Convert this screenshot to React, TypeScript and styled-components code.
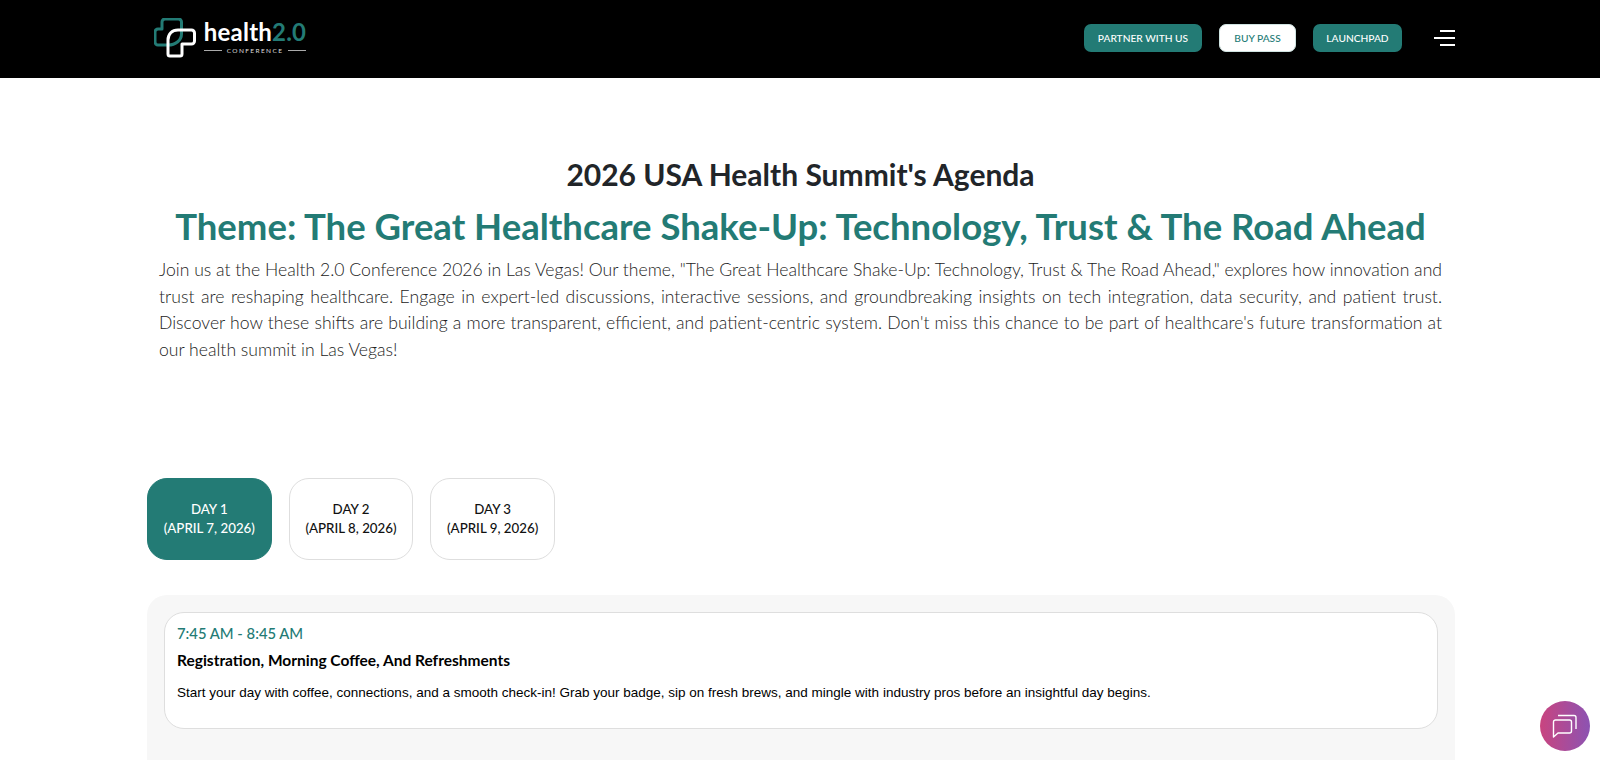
import { createGlobalStyle } from 'styled-components';
import styled from 'styled-components';

const GlobalStyle = createGlobalStyle`
  * { box-sizing: border-box; }
  html, body { margin: 0; padding: 0; background: #fff; overflow: hidden; }
  body { font-family: Lato, "Open Sans", sans-serif; }
`;

const TEAL = '#237b75';

const Page = styled.div`
  width: 1600px;
  height: 760px;
  overflow: hidden;
  position: relative;
`;

const Header = styled.header`
  height: 78px;
  background: #000;
  padding: 0 145px 3px 154px;
  display: flex;
  align-items: center;
  justify-content: space-between;
`;

const Logo = styled.div`
  display: flex;
  align-items: center;
  gap: 8px;
`;

const LogoText = styled.div`
  display: flex;
  flex-direction: column;
  align-items: center;
  width: 102px;
`;

const Wordmark = styled.div`
  font-size: 24px;
  font-weight: 700;
  line-height: 24px;
  letter-spacing: 0.2px;
  color: #fff;
  white-space: nowrap;
  span { color: ${TEAL}; }
`;

const Tagline = styled.div`
  display: flex;
  align-items: center;
  gap: 5px;
  width: 100%;
  margin-top: 2px;
  font-size: 6.5px;
  line-height: 9px;
  letter-spacing: 1.4px;
  color: #ddd;
  &::before, &::after {
    content: '';
    flex: 1;
    height: 1px;
    background: #aaa;
  }
`;

const Nav = styled.nav`
  display: flex;
  align-items: center;
`;

const NavButton = styled.button<{ $light?: boolean; $w: number }>`
  width: ${p => p.$w}px;
  height: 28px;
  margin-right: 17px;
  border-radius: 7px;
  border: ${p => (p.$light ? `1px solid #cfe3e1` : 'none')};
  background: ${p => (p.$light ? '#fff' : TEAL)};
  color: ${p => (p.$light ? TEAL : '#fff')};
  font-family: Lato, sans-serif;
  font-size: 10.2px;
  font-weight: 500;
  padding: 0;
`;

const Burger = styled.div`
  margin-left: 15px;
  width: 21px;
  display: flex;
  flex-direction: column;
  align-items: flex-end;
  gap: 5px;
`;

const BurgerLine = styled.span<{ $w: number }>`
  display: block;
  height: 2px;
  width: ${p => p.$w}px;
  background: #fff;
`;

const Intro = styled.section`
  padding: 78px 158px 0 159px;
  display: flex;
  flex-direction: column;
  align-items: center;
`;

const Title = styled.h1`
  margin: 0;
  font-size: 30px;
  line-height: 36px;
  font-weight: 700;
  color: #212529;
`;

const Theme = styled.h2`
  margin: 12px 0 0;
  font-size: 36.5px;
  line-height: 44px;
  font-weight: 700;
  color: ${TEAL};
  white-space: nowrap;
`;

const Lead = styled.p`
  margin: 9px 0 0;
  font-size: 17.6px;
  line-height: 26.5px;
  font-weight: 300;
  color: #222;
  text-align: justify;
`;

const Tabs = styled.div`
  display: flex;
  gap: 17px;
  margin: 115px 0 0 147px;
`;

const Tab = styled.div<{ $active?: boolean }>`
  width: 124.67px;
  height: 82px;
  border-radius: 20px;
  border: 1px solid ${p => (p.$active ? TEAL : '#dedede')};
  background: ${p => (p.$active ? TEAL : '#fff')};
  color: ${p => (p.$active ? '#fff' : '#111')};
  font-size: 13.3px;
  line-height: 19px;
  font-weight: 500;
  display: flex;
  flex-direction: column;
  align-items: center;
  justify-content: center;
`;

const Panel = styled.section`
  margin: 35px 145px 0 147px;
  height: 300px;
  padding: 17px;
  background: #f7f7f7;
  border-radius: 20px;
`;

const Card = styled.article`
  height: 117px;
  padding: 10px 12px;
  background: #fff;
  border: 1px solid #dedede;
  border-radius: 20px;
`;

const Time = styled.div`
  font-size: 14.8px;
  line-height: 20px;
  font-weight: 500;
  color: ${TEAL};
`;

const CardTitle = styled.h3`
  margin: 7px 0 0;
  font-size: 15.5px;
  line-height: 20px;
  font-weight: 700;
  color: #000;
`;

const CardText = styled.p`
  margin: 13px 0 0;
  font-family: "Liberation Sans", Arial, sans-serif;
  font-size: 13.5px;
  line-height: 20px;
  color: #000;
`;

const ChatBubble = styled.button`
  position: absolute;
  left: 1540px;
  top: 701px;
  width: 50px;
  height: 50px;
  border: none;
  padding: 0;
  border-radius: 50%;
  background: linear-gradient(90deg, #c9447f, #8c53b2);
  display: flex;
  align-items: center;
  justify-content: center;
`;

function LogoMark() {
  return (
    <svg width="42" height="40" viewBox="0 0 42 40" fill="none" strokeLinejoin="round">
      <path
        d="M27.5 16V4a3 3 0 0 0-3-3H11a3 3 0 0 0-3 3v7H4a3 3 0 0 0-3 3v10a3 3 0 0 0 3 3h10C22 27 27.5 22 27.5 16z"
        stroke={TEAL}
        strokeWidth="3"
      />
      <path
        d="M14 36V22c0-6 4-10 10-10h13.5a3 3 0 0 1 3 3v8a3 3 0 0 1-3 3H28v10a2 2 0 0 1-2 2H16a2 2 0 0 1-2-2z"
        stroke="#fff"
        strokeWidth="3"
      />
    </svg>
  );
}

function ChatIcon() {
  return (
    <svg width="26" height="26" viewBox="0 0 26 26" fill="none" stroke="#fff" strokeWidth="1.4" strokeLinejoin="round">
      <path d="M1.5 9a2 2 0 0 1 2-2h14a2 2 0 0 1 2 2v9a2 2 0 0 1-2 2H6l-4.5 4z" />
      <path d="M6 2.5h16a2 2 0 0 1 2 2V16" />
    </svg>
  );
}

export default function App() {
  return (
    <Page>
      <GlobalStyle />
      <Header>
        <Logo>
          <LogoMark />
          <LogoText>
            <Wordmark>
              health<span>2.0</span>
            </Wordmark>
            <Tagline>CONFERENCE</Tagline>
          </LogoText>
        </Logo>
        <Nav>
          <NavButton $w={118}>PARTNER WITH US</NavButton>
          <NavButton $light $w={77}>BUY PASS</NavButton>
          <NavButton $w={89}>LAUNCHPAD</NavButton>
          <Burger>
            <BurgerLine $w={15} />
            <BurgerLine $w={21} />
            <BurgerLine $w={15} />
          </Burger>
        </Nav>
      </Header>

      <Intro>
        <Title>2026 USA Health Summit's Agenda</Title>
        <Theme>Theme: The Great Healthcare Shake-Up: Technology, Trust &amp; The Road Ahead</Theme>
        <Lead>
          Join us at the Health 2.0 Conference 2026 in Las Vegas! Our theme, "The Great Healthcare Shake-Up:
          Technology, Trust &amp; The Road Ahead," explores how innovation and trust are reshaping healthcare.
          Engage in expert-led discussions, interactive sessions, and groundbreaking insights on tech integration,
          data security, and patient trust. Discover how these shifts are building a more transparent, efficient,
          and patient-centric system. Don't miss this chance to be part of healthcare's future transformation at
          our health summit in Las Vegas!
        </Lead>
      </Intro>

      <Tabs>
        <Tab $active>
          <span>DAY 1</span>
          <span>(APRIL 7, 2026)</span>
        </Tab>
        <Tab>
          <span>DAY 2</span>
          <span>(APRIL 8, 2026)</span>
        </Tab>
        <Tab>
          <span>DAY 3</span>
          <span>(APRIL 9, 2026)</span>
        </Tab>
      </Tabs>

      <Panel>
        <Card>
          <Time>7:45 AM - 8:45 AM</Time>
          <CardTitle>Registration, Morning Coffee, And Refreshments</CardTitle>
          <CardText>
            Start your day with coffee, connections, and a smooth check-in! Grab your badge, sip on fresh brews, and
            mingle with industry pros before an insightful day begins.
          </CardText>
        </Card>
      </Panel>

      <ChatBubble aria-label="Chat">
        <ChatIcon />
      </ChatBubble>
    </Page>
  );
}
